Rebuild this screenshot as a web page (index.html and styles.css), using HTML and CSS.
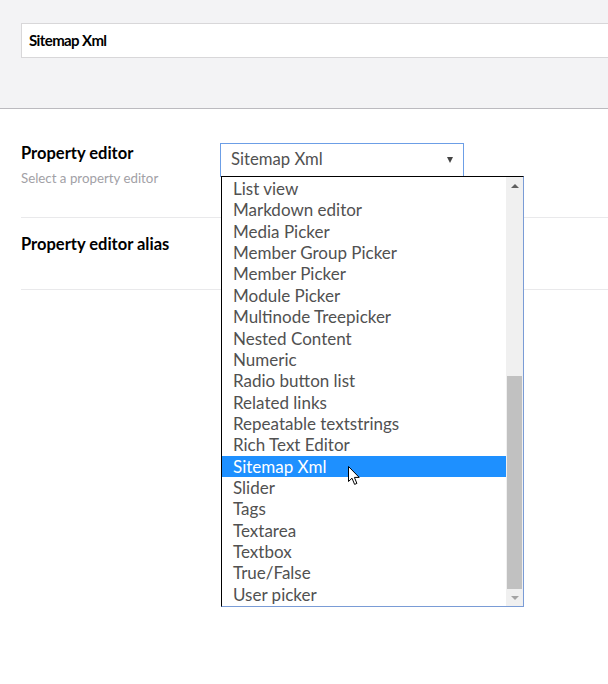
FILE: index.html
```html
<!DOCTYPE html>
<html>
<head>
<meta charset="utf-8">
<link rel="stylesheet" href="styles.css">
</head>
<body>
<div class="header">
  <div class="name-input">Sitemap Xml</div>
</div>
<div class="content">
  <div class="row row-editor">
    <div class="label-col">
      <div class="label">Property editor</div>
      <div class="desc">Select a property editor</div>
    </div>
    <div class="control">
      <div class="select">
        <span>Sitemap Xml</span>
        <span class="caret"></span>
      </div>
      <div class="dropdown">
        <ul class="options">
          <li>List view</li>
          <li>Markdown editor</li>
          <li>Media Picker</li>
          <li>Member Group Picker</li>
          <li>Member Picker</li>
          <li>Module Picker</li>
          <li>Multinode Treepicker</li>
          <li>Nested Content</li>
          <li>Numeric</li>
          <li>Radio button list</li>
          <li>Related links</li>
          <li>Repeatable textstrings</li>
          <li>Rich Text Editor</li>
          <li class="selected">Sitemap Xml</li>
          <li>Slider</li>
          <li>Tags</li>
          <li>Textarea</li>
          <li>Textbox</li>
          <li>True/False</li>
          <li>User picker</li>
        </ul>
        <div class="scrollbar">
          <div class="arrow up"></div>
          <div class="track"><div class="thumb"></div></div>
          <div class="arrow down"></div>
        </div>
        <svg class="cursor" width="13" height="20" viewBox="0 0 13 20">
          <path d="M0.5 0.5 L0.5 15.5 L4 12.2 L6.6 18.4 L8.9 17.4 L6.4 11.4 L11.2 11.4 Z" fill="#fff" stroke="#000" stroke-width="1" stroke-linejoin="miter"/>
        </svg>
      </div>
    </div>
  </div>
  <div class="row row-alias">
    <div class="label-col">
      <div class="label">Property editor alias</div>
    </div>
  </div>
</div>
</body>
</html>
```
FILE: styles.css
```css
html, body {
  margin: 0;
  padding: 0;
}
body {
  width: 608px;
  height: 684px;
  overflow: hidden;
  background: #fff;
  font-family: Lato, "Open Sans", "Liberation Sans", sans-serif;
  color: #000;
}
.header {
  background: #f3f3f5;
  border-bottom: 1px solid #bbbabf;
  box-sizing: border-box;
  height: 109px;
  padding: 23px 0 0 21px;
}
.name-input {
  width: 640px;
  height: 35px;
  box-sizing: border-box;
  background: #fff;
  border: 1px solid #d8d7d9;
  padding: 0 0 0 7px;
  font-weight: 700;
  font-size: 15px;
  letter-spacing: -0.6px;
  line-height: 33px;
  color: #000;
}
.content {
  padding-left: 21px;
}
.row {
  display: flex;
  border-bottom: 1px solid #e9e9eb;
  box-sizing: border-box;
}
.row-editor {
  height: 109px;
  padding-top: 33px;
}
.row-alias {
  height: 72px;
  padding-top: 15px;
}
.label-col {
  width: 199px;
  flex: none;
}
.label {
  font-weight: 700;
  font-size: 16.5px;
  line-height: 22px;
  color: #000;
}
.desc {
  margin-top: 5px;
  font-size: 13.3px;
  line-height: 18px;
  color: #a2a1a6;
}
.control {
  position: relative;
  padding-top: 1px;
}
.select {
  width: 244px;
  height: 34px;
  box-sizing: border-box;
  border: 1px solid #6c9ee6;
  display: flex;
  align-items: center;
  justify-content: space-between;
  padding: 0 10px 2px 10px;
  font-size: 16.7px;
  color: #515151;
}
.caret {
  width: 0;
  height: 0;
  border-left: 3.5px solid transparent;
  border-right: 3.5px solid transparent;
  border-top: 6px solid #444;
  margin-top: 2px;
}
.dropdown {
  position: absolute;
  left: 1px;
  top: 34px;
  width: 303px;
  height: 431px;
  box-sizing: border-box;
  background: #fff;
  border-top: 1px solid #000;
  border-left: 1px solid #000;
  border-right: 1px solid #7a9cd6;
  border-bottom: 1px solid #7a9cd6;
  display: flex;
  z-index: 5;
}
.options {
  list-style: none;
  margin: 0;
  padding: 1px 0 0 0;
  flex: 1;
}
.options li {
  height: 21.36px;
  line-height: 21.36px;
  padding-left: 11px;
  font-size: 17px;
  color: #515151;
  white-space: nowrap;
}
.options li.selected {
  background: #1e90ff;
  color: #fff;
}
.scrollbar {
  width: 17px;
  flex: none;
  background: #f0f0f0;
  display: flex;
  flex-direction: column;
}
.arrow {
  height: 17px;
  flex: none;
  display: flex;
  align-items: center;
  justify-content: center;
}
.arrow::before {
  content: "";
  width: 0;
  height: 0;
  border-left: 4px solid transparent;
  border-right: 4px solid transparent;
}
.arrow.up::before {
  border-bottom: 4px solid #606060;
}
.arrow.down::before {
  border-top: 4px solid #a3a3a3;
}
.track {
  flex: 1;
  position: relative;
}
.thumb {
  position: absolute;
  left: 1px;
  right: 1px;
  top: 182px;
  bottom: 0;
  background: #c1c1c1;
}
.cursor {
  position: absolute;
  left: 126px;
  top: 289px;
}
```
